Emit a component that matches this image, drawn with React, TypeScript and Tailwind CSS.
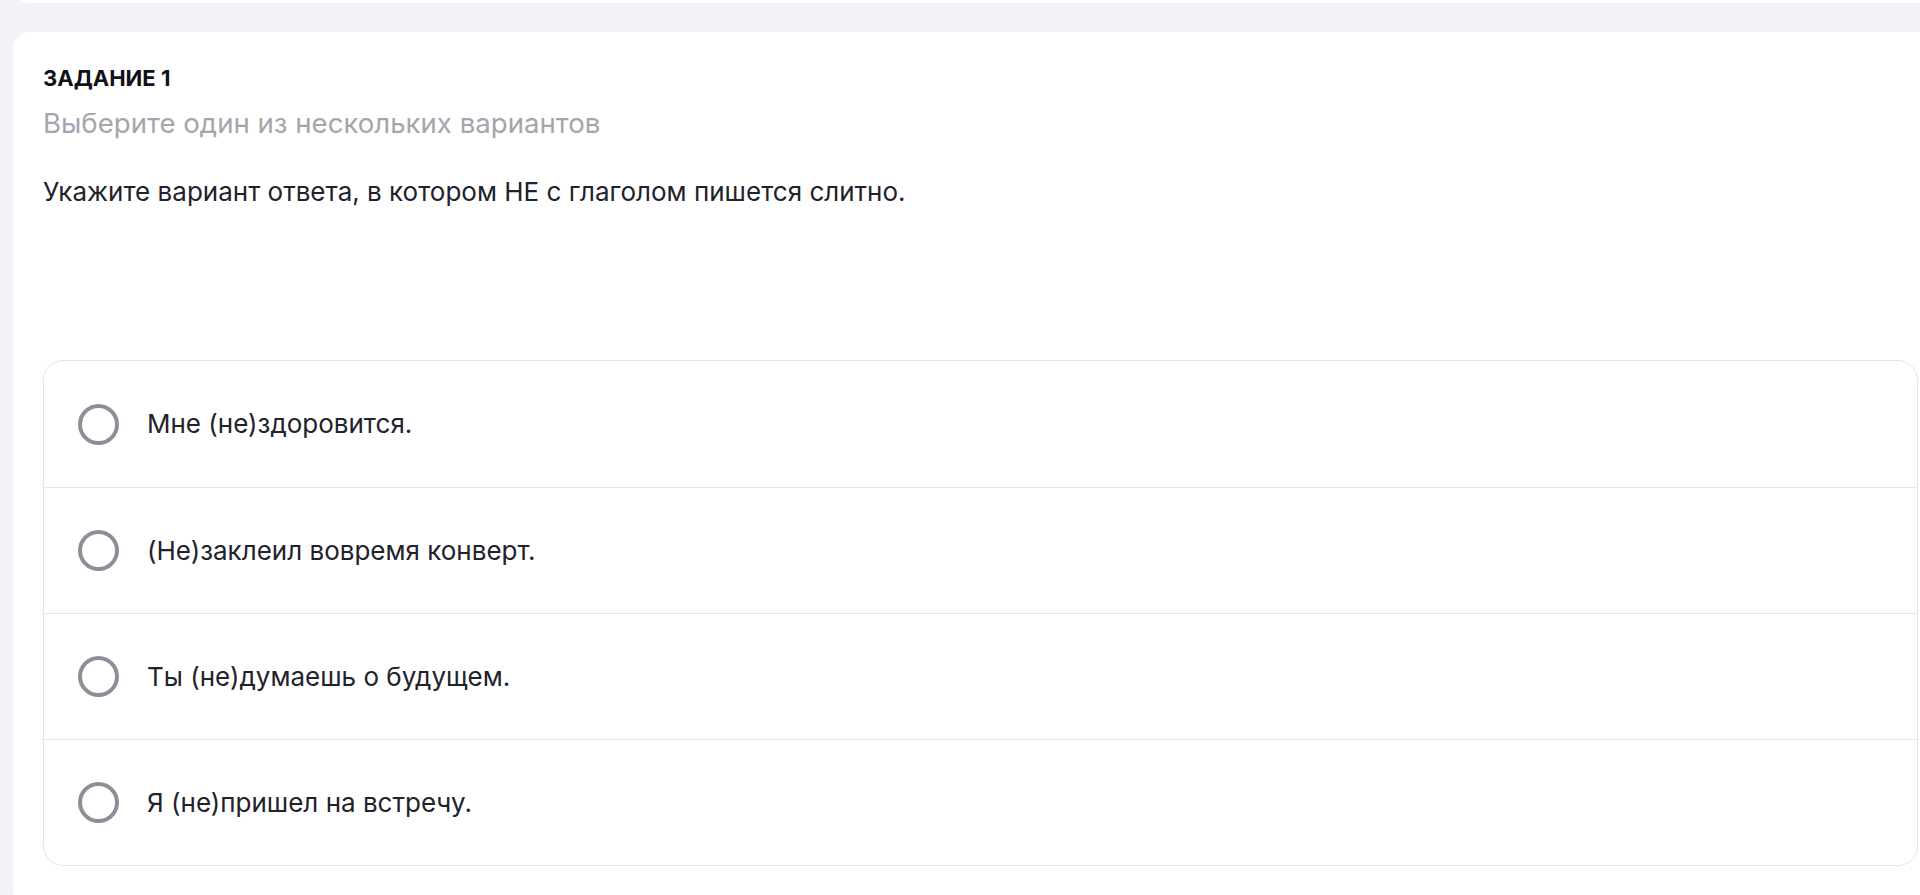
import React from "react";

const options = [
  "Мне (не)здоровится.",
  "(Не)заклеил вовремя конверт.",
  "Ты (не)думаешь о будущем.",
  "Я (не)пришел на встречу.",
];

function Radio() {
  return (
    <span className="block w-[41px] h-[41px] shrink-0 rounded-full border-[4px] border-[#8e8e99] bg-white" />
  );
}

export default function App() {
  return (
    <div
      className="w-[1920px] h-[895px] overflow-hidden bg-[#f2f2f7]"
      style={{ fontFamily: "Inter, 'Noto Sans', sans-serif" }}
    >
      {/* bottom edge of the previous task card */}
      <div className="ml-[13px] mt-[-40px] h-[43px] w-[1935px] rounded-[16px] bg-white" />

      <div className="ml-[13px] mt-[29px] w-[1935px] rounded-[16px] bg-white pl-[30px] pr-[30px] pt-[32px] pb-[40px]">
        <div className="text-[22px] leading-[28px] font-bold uppercase text-[#111118]">
          Задание 1
        </div>
        <div className="mt-[14px] text-[27.6px] leading-[34px] text-[#a5a5ad]">
          Выберите один из нескольких вариантов
        </div>
        <div className="mt-[36px] text-[26px] leading-[32px] text-[#22222c]">
          Укажите вариант ответа, в котором НЕ с глаголом пишется слитно.
        </div>

        <div className="mt-[152px] rounded-[20px] border border-[#e5e5ea] overflow-hidden">
          {options.map((text, i) => (
            <label
              key={text}
              className={
                "flex h-[126px] items-center gap-[28px] pl-[34px] cursor-pointer" +
                (i > 0 ? " border-t border-[#e5e5ea]" : "")
              }
            >
              <Radio />
              <span className="text-[26px] leading-[32px] text-[#22222c]">{text}</span>
            </label>
          ))}
        </div>
      </div>
    </div>
  );
}
